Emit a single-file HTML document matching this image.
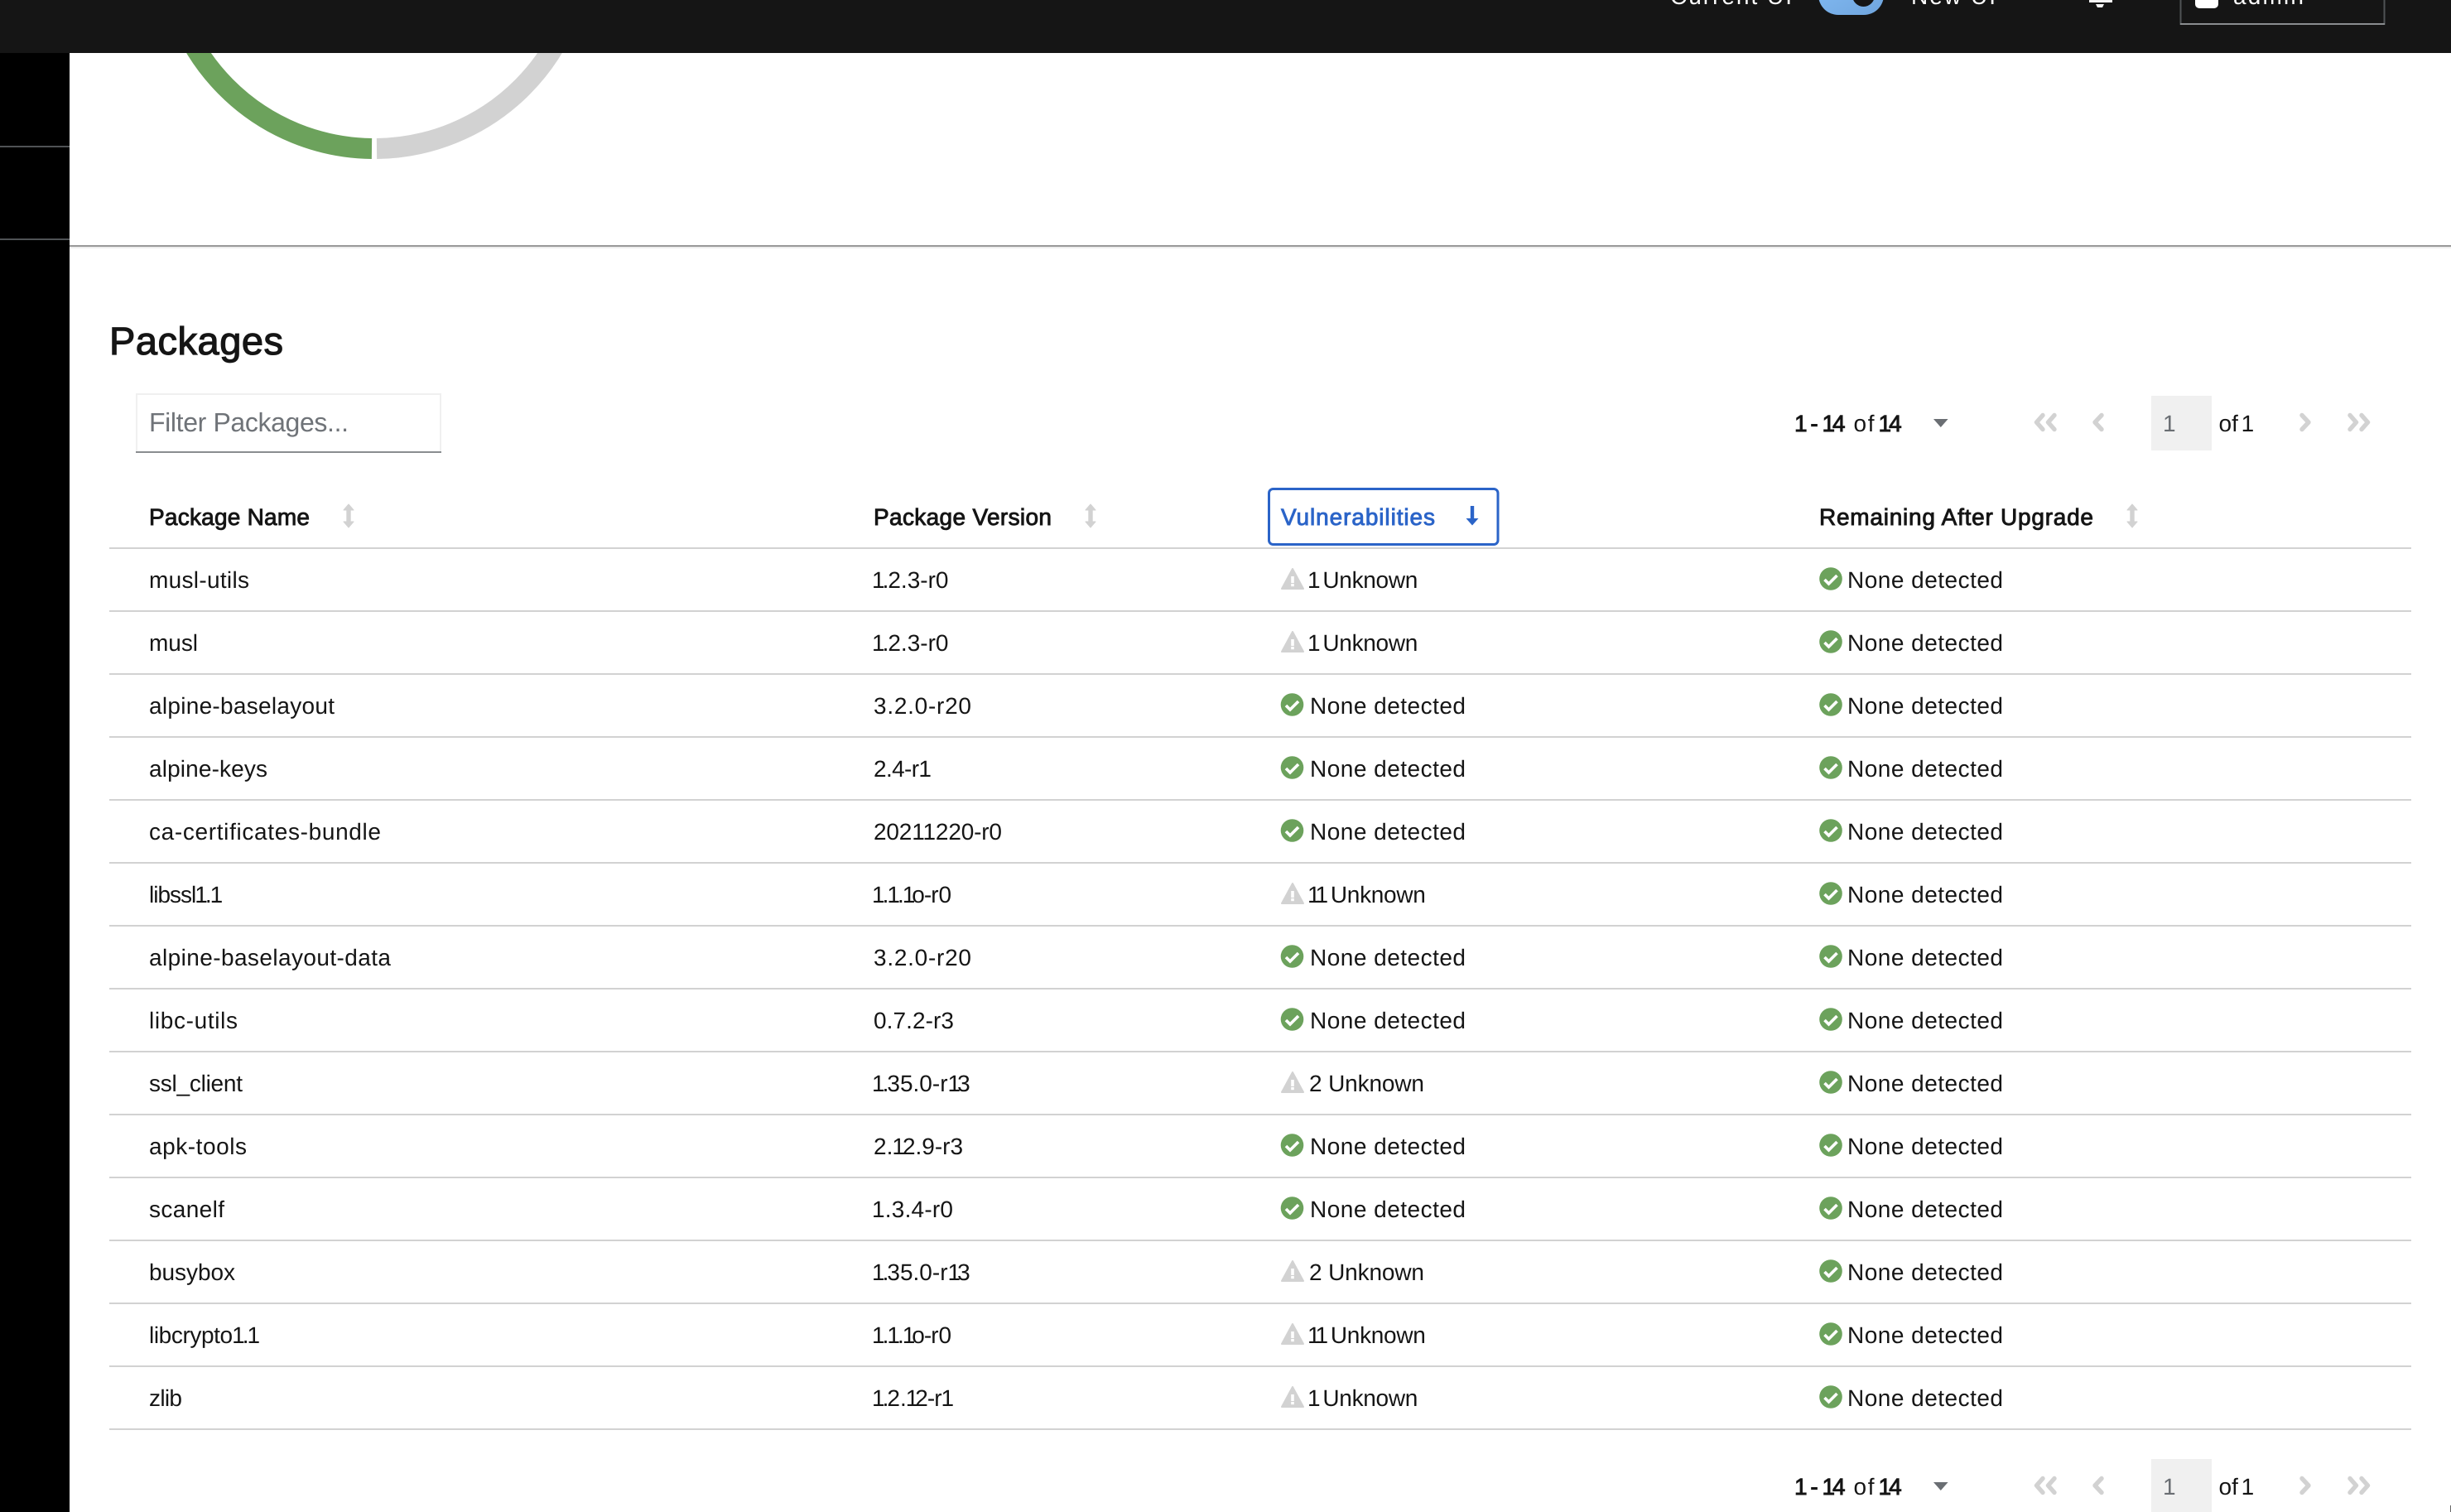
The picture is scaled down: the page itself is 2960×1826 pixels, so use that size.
<!DOCTYPE html>
<html lang="en">
<head>
<meta charset="utf-8">
<title>Packages</title>
<style>
html,body{margin:0;padding:0;width:2960px;height:1826px;overflow:hidden;background:#fff}
svg{display:block}
text{font-family:"Liberation Sans",sans-serif;font-size:28px;fill:#151515;text-rendering:geometricPrecision}
.m{stroke:#151515;stroke-width:.9px}
.c{fill:none;stroke:#d2d2d2;stroke-width:5.4;stroke-linecap:round;stroke-linejoin:round}
</style>
</head>
<body>
<svg xmlns="http://www.w3.org/2000/svg" width="2960" height="1826" viewBox="0 0 2960 1826">
<defs>
<linearGradient id="tg" x1="0" y1="0" x2="1" y2="1"><stop offset="0" stop-color="#84bcf4"/><stop offset="1" stop-color="#6fa5de"/></linearGradient>
<g id="chk"><circle cx="0" cy="0" r="13.8" fill="#6ca25c"/><path d="M-7.5 1L-2.5 6L7.5-4" fill="none" stroke="#fff" stroke-width="3.6"/></g>
<g id="warn"><path d="M0 0L13 24H-13Z" fill="#d2d2d2" stroke="#d2d2d2" stroke-width="2" stroke-linejoin="round"/><rect x="-1.8" y="9" width="3.6" height="8" fill="#fff"/><rect x="-1.8" y="18" width="3.6" height="3.2" fill="#fff"/></g>
<path id="sort" d="M0 0L6 7H2.2V21H6L0 28L-6 21H-2.2V7H-6Z" fill="#d2d2d2" stroke="#d2d2d2" stroke-width="1" stroke-linejoin="round"/>
<g id="pager">
<text x="2167" y="521" dx="0 -3 -1 -1 -2 -3" class="m">1 - 14</text>
<text x="2238.5" y="521" textLength="25">of</text>
<text x="2268.5" y="521" dx="0 -3" class="m">14</text>
<path d="M2335 506H2352.6L2343.8 516Z" fill="#6a6e73"/>
<path class="c" d="M2467 501.500L2459.500 510L2467 518.500M2481 501.500L2473.500 510L2481 518.500"/>
<path class="c" d="M2538 501.500L2530 510L2538 518.500"/>
<rect x="2598" y="478" width="73" height="66" fill="#f0f0f0"/>
<text x="2612" y="521" style="fill:#6a6e73">1</text>
<text x="2679.500" y="521" dx="0 0 -2 -2">of 1</text>
<path class="c" d="M2780 501.500L2788 510L2780 518.500"/>
<path class="c" d="M2838 501.500L2845.500 510L2838 518.500M2852 501.500L2859.500 510L2852 518.500"/>
</g>
</defs>

<rect width="2960" height="1826" fill="#fff"/>

<!-- donut chart -->
<path d="M449 179.500A252.500 252.500 0 0 1 199.500-73" fill="none" stroke="#6ca25c" stroke-width="25"/>
<path d="M455 179.500A252.500 252.500 0 0 0 704.500-73" fill="none" stroke="#d2d2d2" stroke-width="25"/>

<!-- sidebar -->
<rect x="0" y="64" width="84" height="1762" fill="#000"/>
<rect x="0" y="176" width="84" height="2" fill="#4f5255"/>
<rect x="0" y="288" width="84" height="2" fill="#4f5255"/>

<!-- top bar -->
<rect x="0" y="0" width="2960" height="64" fill="#151515"/>
<text x="2017" y="5" textLength="147" style="fill:#fff">Current UI</text>
<rect x="2196" y="-30" width="79" height="48" rx="24" fill="url(#tg)"/>
<circle cx="2250.500" cy="-5.500" r="13.500" fill="#151515"/>
<text x="2308" y="5" textLength="102" style="fill:#fff">New UI</text>
<rect x="2523" y="-12" width="28" height="15" fill="#f4f4f4"/>
<path d="M2531 5H2541L2539 9H2533Z" fill="#f4f4f4"/>
<rect x="2633.500" y="-10" width="246" height="39" fill="none" stroke="#4f5255" stroke-width="2"/>
<rect x="2633" y="28" width="247" height="2" fill="#8a8d90"/>
<rect x="2651" y="-14" width="28" height="24" rx="5" fill="#fff"/>
<text x="2697" y="5" textLength="85" style="fill:#fff">admin</text>

<!-- divider -->
<rect x="84" y="296" width="2876" height="2" fill="#999"/>
<rect x="84" y="298" width="2876" height="2" fill="#ededed"/>

<!-- heading -->
<text x="132" y="428" textLength="210" style="font-size:47px;stroke:#151515;stroke-width:1.2px">Packages</text>

<!-- filter -->
<rect x="165" y="476" width="367" height="70" fill="#fff" stroke="#f0f0f0" stroke-width="2"/>
<rect x="164" y="545" width="369" height="2" fill="#8a8d90"/>
<text x="180" y="521" textLength="241" style="font-size:32px;fill:#6f7378">Filter Packages...</text>

<use href="#pager"/>

<!-- header -->
<text x="180" y="634" textLength="194" class="m">Package Name</text>
<use href="#sort" x="421" y="609"/>
<text x="1055" y="634" textLength="215" class="m">Package Version</text>
<use href="#sort" x="1317" y="609"/>
<rect x="1532.500" y="590.500" width="276.500" height="67" rx="5" fill="#fff" stroke="#2b64c8" stroke-width="3"/>
<text x="1547" y="634" textLength="186" style="fill:#2b64c8;stroke:#2b64c8;stroke-width:.9px">Vulnerabilities</text>
<path d="M1775.800 611H1780.200V626H1785.500L1778 634.500L1770.500 626H1775.800Z" fill="#2b64c8"/>
<text x="2197" y="634" textLength="331" class="m">Remaining After Upgrade</text>
<use href="#sort" x="2575" y="609"/>
<rect x="132" y="661" width="2780" height="2" fill="#d2d2d2"/>

<!-- rows -->
<g>
<text x="180" y="710" textLength="121">musl-utils</text>
<text x="1053" y="710" dx="0 -3 -1">1.2.3-r0</text>
<use href="#warn" x="1561" y="687"/><text x="1579" y="710" dx="0 -2 -3 -.3 -.3 -.3 -.3 -.3 -.3">1 Unknown</text>
<use href="#chk" x="2211" y="699"/><text x="2231" y="710" textLength="188">None detected</text>
<rect x="132" y="737" width="2780" height="2" fill="#d2d2d2"/>
</g>
<g transform="translate(0,76)">
<text x="180" y="710" textLength="59">musl</text>
<text x="1053" y="710" dx="0 -3 -1">1.2.3-r0</text>
<use href="#warn" x="1561" y="687"/><text x="1579" y="710" dx="0 -2 -3 -.3 -.3 -.3 -.3 -.3 -.3">1 Unknown</text>
<use href="#chk" x="2211" y="699"/><text x="2231" y="710" textLength="188">None detected</text>
<rect x="132" y="737" width="2780" height="2" fill="#d2d2d2"/>
</g>
<g transform="translate(0,152)">
<text x="180" y="710" textLength="224">alpine-baselayout</text>
<text x="1055" y="710" textLength="118">3.2.0-r20</text>
<use href="#chk" x="1560.500" y="699"/><text x="1582" y="710" textLength="188">None detected</text>
<use href="#chk" x="2211" y="699"/><text x="2231" y="710" textLength="188">None detected</text>
<rect x="132" y="737" width="2780" height="2" fill="#d2d2d2"/>
</g>
<g transform="translate(0,228)">
<text x="180" y="710" textLength="143">alpine-keys</text>
<text x="1055" y="710" textLength="70">2.4-r1</text>
<use href="#chk" x="1560.500" y="699"/><text x="1582" y="710" textLength="188">None detected</text>
<use href="#chk" x="2211" y="699"/><text x="2231" y="710" textLength="188">None detected</text>
<rect x="132" y="737" width="2780" height="2" fill="#d2d2d2"/>
</g>
<g transform="translate(0,304)">
<text x="180" y="710" textLength="280">ca-certificates-bundle</text>
<text x="1055" y="710" textLength="155">20211220-r0</text>
<use href="#chk" x="1560.500" y="699"/><text x="1582" y="710" textLength="188">None detected</text>
<use href="#chk" x="2211" y="699"/><text x="2231" y="710" textLength="188">None detected</text>
<rect x="132" y="737" width="2780" height="2" fill="#d2d2d2"/>
</g>
<g transform="translate(0,380)">
<text x="180" y="710" dx="0 -1 -1 -1 -1 -1 -2 -3 -2">libssl1.1</text>
<text x="1053" y="710" dx="0 -3 -2 -3 -2 -4 -1 -1">1.1.1o-r0</text>
<use href="#warn" x="1561" y="687"/><text x="1579" y="710" dx="0 -4 -2 -3 -.3 -.3 -.3 -.3 -.3 -.3">11 Unknown</text>
<use href="#chk" x="2211" y="699"/><text x="2231" y="710" textLength="188">None detected</text>
<rect x="132" y="737" width="2780" height="2" fill="#d2d2d2"/>
</g>
<g transform="translate(0,456)">
<text x="180" y="710" textLength="292">alpine-baselayout-data</text>
<text x="1055" y="710" textLength="118">3.2.0-r20</text>
<use href="#chk" x="1560.500" y="699"/><text x="1582" y="710" textLength="188">None detected</text>
<use href="#chk" x="2211" y="699"/><text x="2231" y="710" textLength="188">None detected</text>
<rect x="132" y="737" width="2780" height="2" fill="#d2d2d2"/>
</g>
<g transform="translate(0,532)">
<text x="180" y="710" textLength="107">libc-utils</text>
<text x="1055" y="710" textLength="97">0.7.2-r3</text>
<use href="#chk" x="1560.500" y="699"/><text x="1582" y="710" textLength="188">None detected</text>
<use href="#chk" x="2211" y="699"/><text x="2231" y="710" textLength="188">None detected</text>
<rect x="132" y="737" width="2780" height="2" fill="#d2d2d2"/>
</g>
<g transform="translate(0,608)">
<text x="180" y="710" textLength="113">ssl_client</text>
<text x="1053" y="710" dx="0 -3 -2 0 0 0 0 0 0 -4">1.35.0-r13</text>
<use href="#warn" x="1561" y="687"/><text x="1581" y="710" textLength="139">2 Unknown</text>
<use href="#chk" x="2211" y="699"/><text x="2231" y="710" textLength="188">None detected</text>
<rect x="132" y="737" width="2780" height="2" fill="#d2d2d2"/>
</g>
<g transform="translate(0,684)">
<text x="180" y="710" textLength="118">apk-tools</text>
<text x="1055" y="710" dx="0 0 -1 -3">2.12.9-r3</text>
<use href="#chk" x="1560.500" y="699"/><text x="1582" y="710" textLength="188">None detected</text>
<use href="#chk" x="2211" y="699"/><text x="2231" y="710" textLength="188">None detected</text>
<rect x="132" y="737" width="2780" height="2" fill="#d2d2d2"/>
</g>
<g transform="translate(0,760)">
<text x="180" y="710" textLength="91">scanelf</text>
<text x="1053" y="710" textLength="98">1.3.4-r0</text>
<use href="#chk" x="1560.500" y="699"/><text x="1582" y="710" textLength="188">None detected</text>
<use href="#chk" x="2211" y="699"/><text x="2231" y="710" textLength="188">None detected</text>
<rect x="132" y="737" width="2780" height="2" fill="#d2d2d2"/>
</g>
<g transform="translate(0,836)">
<text x="180" y="710" textLength="104">busybox</text>
<text x="1053" y="710" dx="0 -3 -2 0 0 0 0 0 0 -4">1.35.0-r13</text>
<use href="#warn" x="1561" y="687"/><text x="1581" y="710" textLength="139">2 Unknown</text>
<use href="#chk" x="2211" y="699"/><text x="2231" y="710" textLength="188">None detected</text>
<rect x="132" y="737" width="2780" height="2" fill="#d2d2d2"/>
</g>
<g transform="translate(0,912)">
<text x="180" y="710" dx="0 -.4 -.4 -.4 -.4 -.4 -.4 -.4 -.4 -1 -3 -2">libcrypto1.1</text>
<text x="1053" y="710" dx="0 -3 -2 -3 -2 -4 -1 -1">1.1.1o-r0</text>
<use href="#warn" x="1561" y="687"/><text x="1579" y="710" dx="0 -4 -2 -3 -.3 -.3 -.3 -.3 -.3 -.3">11 Unknown</text>
<use href="#chk" x="2211" y="699"/><text x="2231" y="710" textLength="188">None detected</text>
<rect x="132" y="737" width="2780" height="2" fill="#d2d2d2"/>
</g>
<g transform="translate(0,988)">
<text x="180" y="710" textLength="40">zlib</text>
<text x="1053" y="710" dx="0 -3 -2 0 -1 -4 -1 -1 -1">1.2.12-r1</text>
<use href="#warn" x="1561" y="687"/><text x="1579" y="710" dx="0 -2 -3 -.3 -.3 -.3 -.3 -.3 -.3">1 Unknown</text>
<use href="#chk" x="2211" y="699"/><text x="2231" y="710" textLength="188">None detected</text>
<rect x="132" y="737" width="2780" height="2" fill="#d2d2d2"/>
</g>

<use href="#pager" y="1284"/>
<rect x="2959" y="1818" width="1" height="8" fill="#666"/>
</svg>
</body>
</html>
